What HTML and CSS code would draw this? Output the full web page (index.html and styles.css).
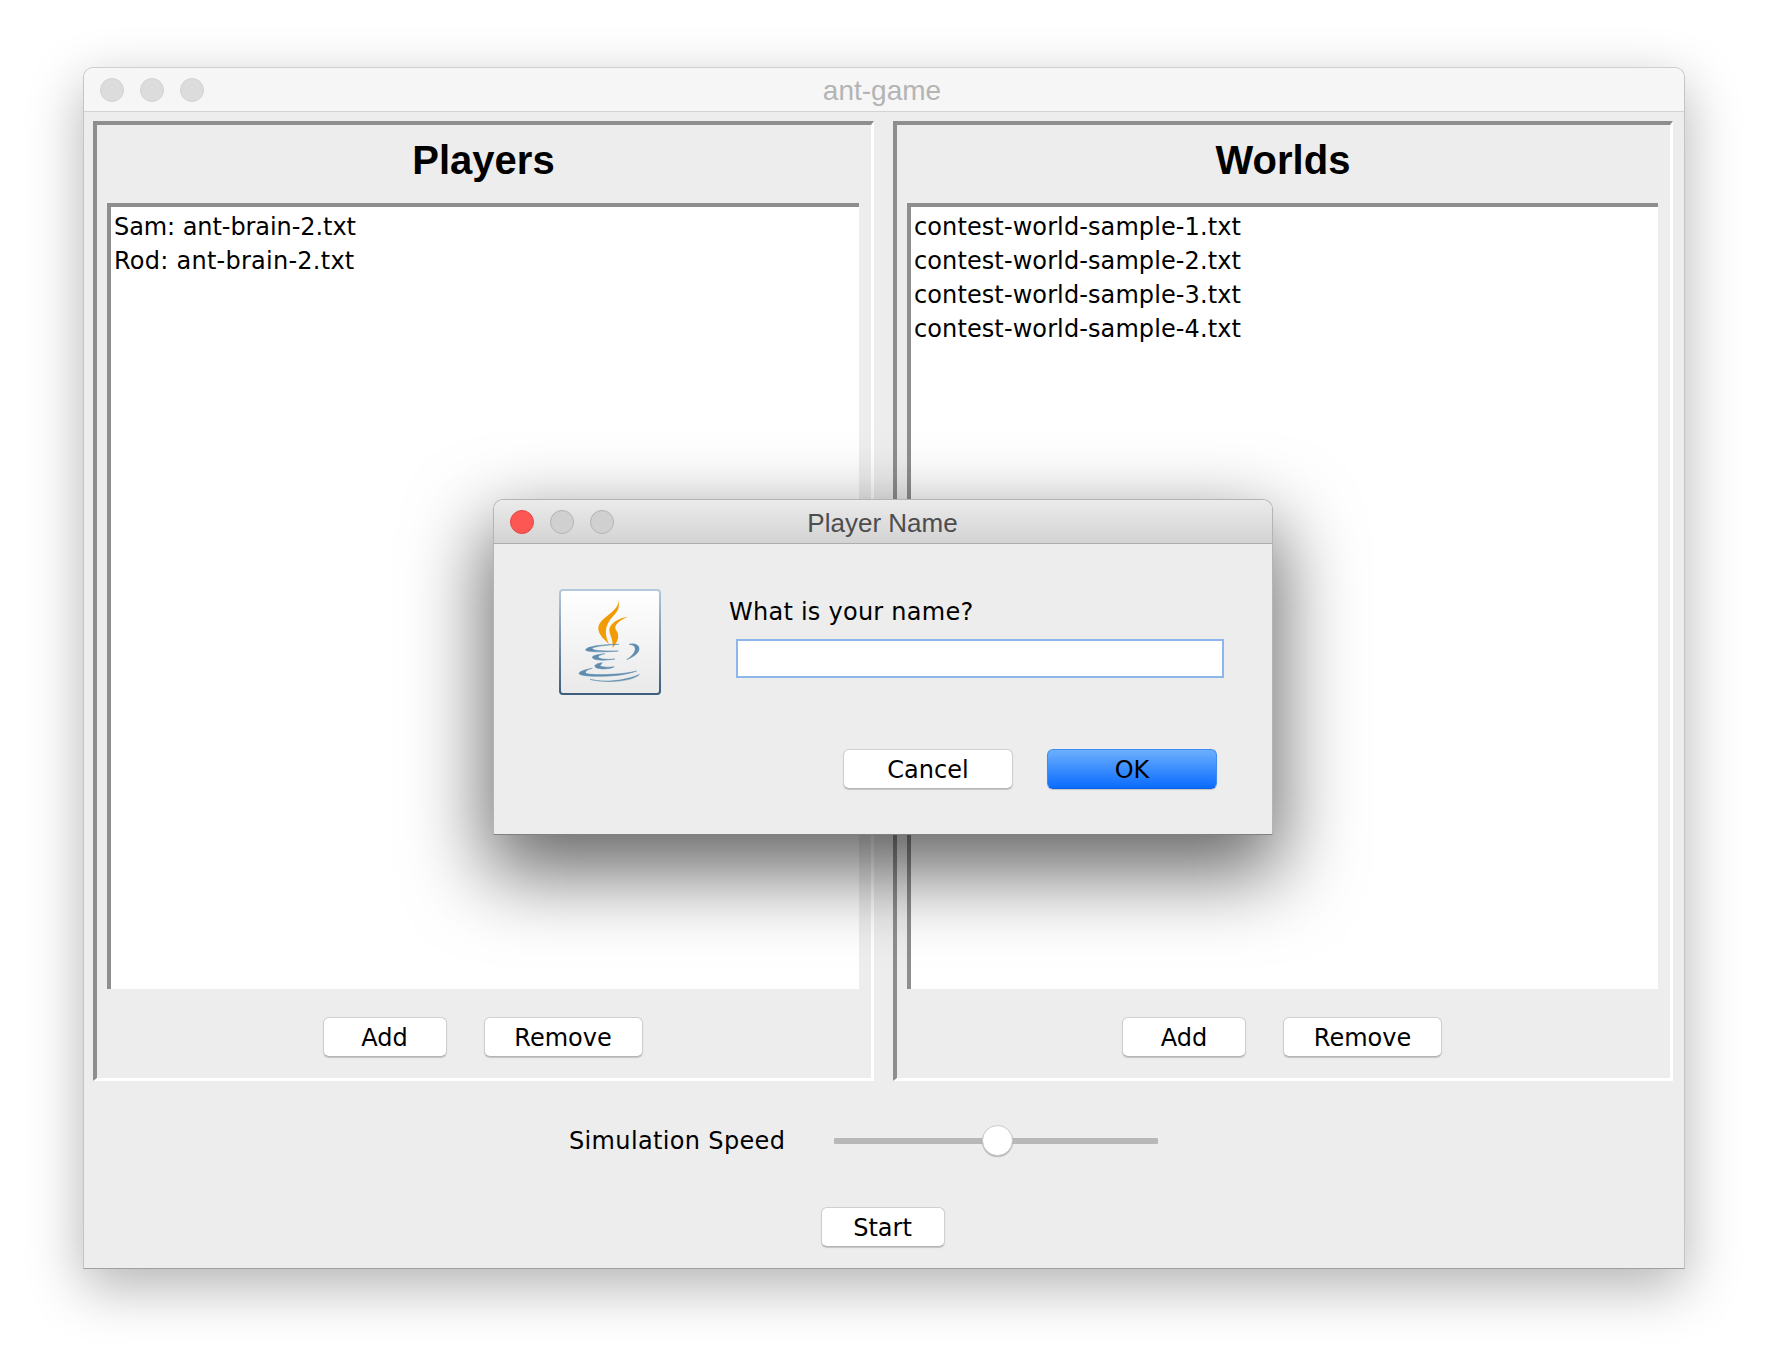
FILE: index.html
```html
<!DOCTYPE html>
<html lang="en">
<head>
    <meta charset="UTF-8">
    <meta name="viewport" content="width=device-width, initial-scale=1.0">
    <title>ant-game</title>
    <link rel="stylesheet" href="styles.css">
</head>
<body>
    <div class="window">
        <div class="titlebar">
            <div class="lights">
                <span class="light"></span>
                <span class="light"></span>
                <span class="light"></span>
            </div>
            <div class="title">ant-game</div>
        </div>
        <div class="panels">
            <section class="panel">
                <h2>Players</h2>
                <ul class="list">
                    <li class="narrow">Sam: ant-brain-2.txt</li>
                    <li class="wide">Rod: ant-brain-2.txt</li>
                </ul>
                <div class="panel-actions">
                    <button class="btn btn-add">Add</button>
                    <button class="btn btn-remove">Remove</button>
                </div>
            </section>
            <section class="panel">
                <h2>Worlds</h2>
                <ul class="list">
                    <li>contest-world-sample-1.txt</li>
                    <li>contest-world-sample-2.txt</li>
                    <li>contest-world-sample-3.txt</li>
                    <li>contest-world-sample-4.txt</li>
                </ul>
                <div class="panel-actions">
                    <button class="btn btn-add">Add</button>
                    <button class="btn btn-remove">Remove</button>
                </div>
            </section>
        </div>
        <div class="speed">
            <label class="speed-label">Simulation Speed</label>
            <div class="slider">
                <div class="slider-track"></div>
                <div class="slider-thumb"></div>
            </div>
        </div>
        <div class="start-row">
            <button class="btn btn-add">Start</button>
        </div>

        <div class="dialog">
            <div class="titlebar dialog-bar">
                <div class="lights">
                    <span class="light light-close"></span>
                    <span class="light light-off"></span>
                    <span class="light light-off"></span>
                </div>
                <div class="title dialog-title">Player Name</div>
            </div>
            <div class="dialog-body">
                <div class="dialog-icon">
                    <svg viewBox="12 12 306 318" width="102" height="106">
                        <defs>
                            <linearGradient id="iconbg" x1="0" y1="0" x2="0" y2="1">
                                <stop offset="0" stop-color="#ffffff"/>
                                <stop offset="1" stop-color="#e9e9e9"/>
                            </linearGradient>
                            <linearGradient id="iconedge" x1="0" y1="0" x2="0" y2="1">
                                <stop offset="0" stop-color="#b4c8dc"/>
                                <stop offset="1" stop-color="#3c5d7c"/>
                            </linearGradient>
                        </defs>
                        <rect x="15" y="15" width="300" height="312" rx="9" fill="url(#iconbg)" stroke="url(#iconedge)" stroke-width="6"/>
                        <g fill="#f29c05">
                            <path d="M188 42C200 80 130 95 130 130C130 150 150 165 162 178C150 150 148 130 165 105C180 85 200 75 188 42Z"/>
                            <path d="M218 95C190 100 163 115 163 135C163 150 175 160 173 188C190 170 195 150 183 135C175 122 190 108 218 95Z"/>
                        </g>
                        <g fill="#5f8cae" stroke="#5f8cae" stroke-width="1.5" stroke-linejoin="round">
                            <path d="M192 178C140 178 92 185 92 195C92 200 130 203 190 198C140 198 112 196 112 191C112 186 150 180 192 178Z"/>
                            <path d="M222 178C245 172 258 185 250 200C242 212 228 218 215 224C232 212 243 200 240 188C238 181 230 179 222 178Z"/>
                            <path d="M150 206C125 208 110 212 112 218C115 226 150 228 180 222C155 224 130 222 130 216C130 212 140 208 150 206Z"/>
                            <path d="M142 233C125 235 117 240 120 245C125 254 165 254 178 245C160 248 138 246 135 242Z"/>
                            <path d="M112 250C88 254 72 260 72 266C74 276 190 280 245 258C200 270 100 272 92 264C90 258 100 253 112 250Z"/>
                            <path d="M105 283C150 295 220 285 253 268C235 290 150 295 105 283Z"/>
                        </g>
                    </svg>
                </div>
                <div class="dialog-form">
                    <div class="dialog-question">What is your name?</div>
                    <input class="dialog-input" type="text">
                </div>
            </div>
            <div class="dialog-actions">
                <button class="btn btn-dialog">Cancel</button>
                <button class="btn btn-dialog btn-primary">OK</button>
            </div>
        </div>
    </div>
</body>
</html>
```

FILE: styles.css
```css
* {
	margin: 0;
	padding: 0;
	box-sizing: border-box;
}
body {
	background-color: #fff;
	padding: 67px 83px 0;
	height: 1368px;
	overflow: hidden;
	font-family: "DejaVu Sans", sans-serif;
	font-size: 24px;
	color: #000;
}
.window {
	position: relative;
	width: 1602px;
	height: 1202px;
	background-color: #ededed;
	border: 1px solid #c4c4c4;
	border-top-color: #d0d0d0;
	border-bottom-color: #a0a0a0;
	border-radius: 10px 10px 0 0;
	box-shadow: 0 18px 55px rgba(0, 0, 0, 0.3);
}
.titlebar {
	display: flex;
	align-items: center;
	position: relative;
	height: 44px;
	background-color: #f6f6f6;
	border-bottom: 1px solid #d2d2d2;
	border-radius: 9px 9px 0 0;
}
.lights {
	display: flex;
	gap: 16px;
	padding-left: 16px;
}
.light {
	width: 24px;
	height: 24px;
	border-radius: 50%;
	background-color: #dcdcdc;
	border: 1px solid #d2d2d2;
}
.light-close {
	background-color: #fc5753;
	border-color: #df4744;
}
.light-off {
	background-color: #d0d0d0;
	border-color: #b4b4b4;
}
.title {
	flex: 1;
	margin-left: -124px;
	padding-top: 3px;
	text-align: center;
	font-family: "Liberation Sans", sans-serif;
	font-size: 28px;
	color: #b4b4b4;
}
.panels {
	display: grid;
	grid-template-columns: 781px 780px;
	gap: 19px;
	padding: 9px 0 0 9px;
}
.panel {
	display: flex;
	flex-direction: column;
	height: 960px;
	padding: 0 11px 21px 10px;
	border-style: solid;
	border-width: 4px 3px 3px 4px;
	border-color: #8e8e8e #fff #fff #8e8e8e;
}
.panel h2 {
	height: 78px;
	padding-top: 12px;
	font-family: "Liberation Sans", sans-serif;
	font-size: 40px;
	line-height: 46px;
	font-weight: bold;
	text-align: center;
}
.list {
	list-style: none;
	height: 786px;
	margin-right: 1px;
	padding: 3px 3px;
	background-color: #fff;
	border-style: solid;
	border-width: 4px 0 0 4px;
	border-color: #8e8e8e #fff #fff #8e8e8e;
	letter-spacing: 0.1px;
}
.list li {
	height: 34px;
	line-height: 34px;
}
.list li.narrow {
	letter-spacing: -0.07px;
}
.list li.wide {
	letter-spacing: 0.25px;
}
.panel-actions {
	display: flex;
	justify-content: center;
	gap: 37px;
	margin-top: 28px;
	padding-right: 2px;
}
.btn {
	height: 40px;
	padding-top: 2px;
	background-color: #fff;
	border: 1px solid #cfcfcf;
	border-bottom-color: #b4b4b4;
	border-radius: 6px;
	box-shadow: 0 1px 1px rgba(0, 0, 0, 0.18);
	font-family: "DejaVu Sans", sans-serif;
	font-size: 24px;
	color: #000;
}
.btn-add {
	width: 124px;
}
.btn-remove {
	width: 159px;
}
.speed {
	display: flex;
	align-items: center;
	height: 31px;
	margin-top: 44px;
	padding-left: 485px;
}
.speed-label {
	width: 265px;
	padding-top: 1px;
	letter-spacing: 0.35px;
}
.slider {
	position: relative;
	width: 324px;
	height: 31px;
}
.slider-track {
	height: 6px;
	margin-top: 13px;
	background-color: #b8b8b8;
	border-radius: 1px;
}
.slider-thumb {
	position: absolute;
	left: 148px;
	top: 0;
	width: 31px;
	height: 31px;
	background-color: #fff;
	border: 1px solid #cccccc;
	border-radius: 50%;
	box-shadow: 0 1px 1px rgba(0, 0, 0, 0.25);
}
.start-row {
	display: flex;
	justify-content: center;
	margin-top: 51px;
	padding-right: 3px;
}
.dialog {
	position: absolute;
	left: 409px;
	top: 431px;
	width: 780px;
	height: 336px;
	background-color: #ededed;
	border: 1px solid #b4b4b4;
	border-bottom-color: #808080;
	border-radius: 10px 10px 0 0;
	box-shadow: 0 32px 80px 6px rgba(0, 0, 0, 0.6);
}
.dialog-bar {
	background: linear-gradient(#ebebeb, #d3d3d3);
	border-bottom-color: #adadad;
	height: 44px;
}
.dialog-title {
	margin-left: -121px;
	color: #4d4d4d;
	font-size: 26px;
}
.dialog-body {
	display: flex;
	padding: 45px 0 0 65px;
}
.dialog-icon {
	width: 102px;
	height: 106px;
}
.dialog-form {
	padding: 5px 0 0 68px;
}
.dialog-question {
	height: 45px;
	line-height: 36px;
	letter-spacing: 0.25px;
}
.dialog-input {
	display: block;
	width: 488px;
	height: 39px;
	margin-left: 7px;
	background-color: #fff;
	border: 2px solid #8db7ea;
	outline: none;
}
.dialog-actions {
	display: flex;
	justify-content: flex-end;
	gap: 34px;
	margin-top: 54px;
	padding-right: 55px;
}
.btn-dialog {
	width: 170px;
}
.btn-primary {
	background: linear-gradient(#6cb0fd, #0a6bfe);
	border-color: #3d8df5;
	border-bottom-color: #0a63ee;
}
```
